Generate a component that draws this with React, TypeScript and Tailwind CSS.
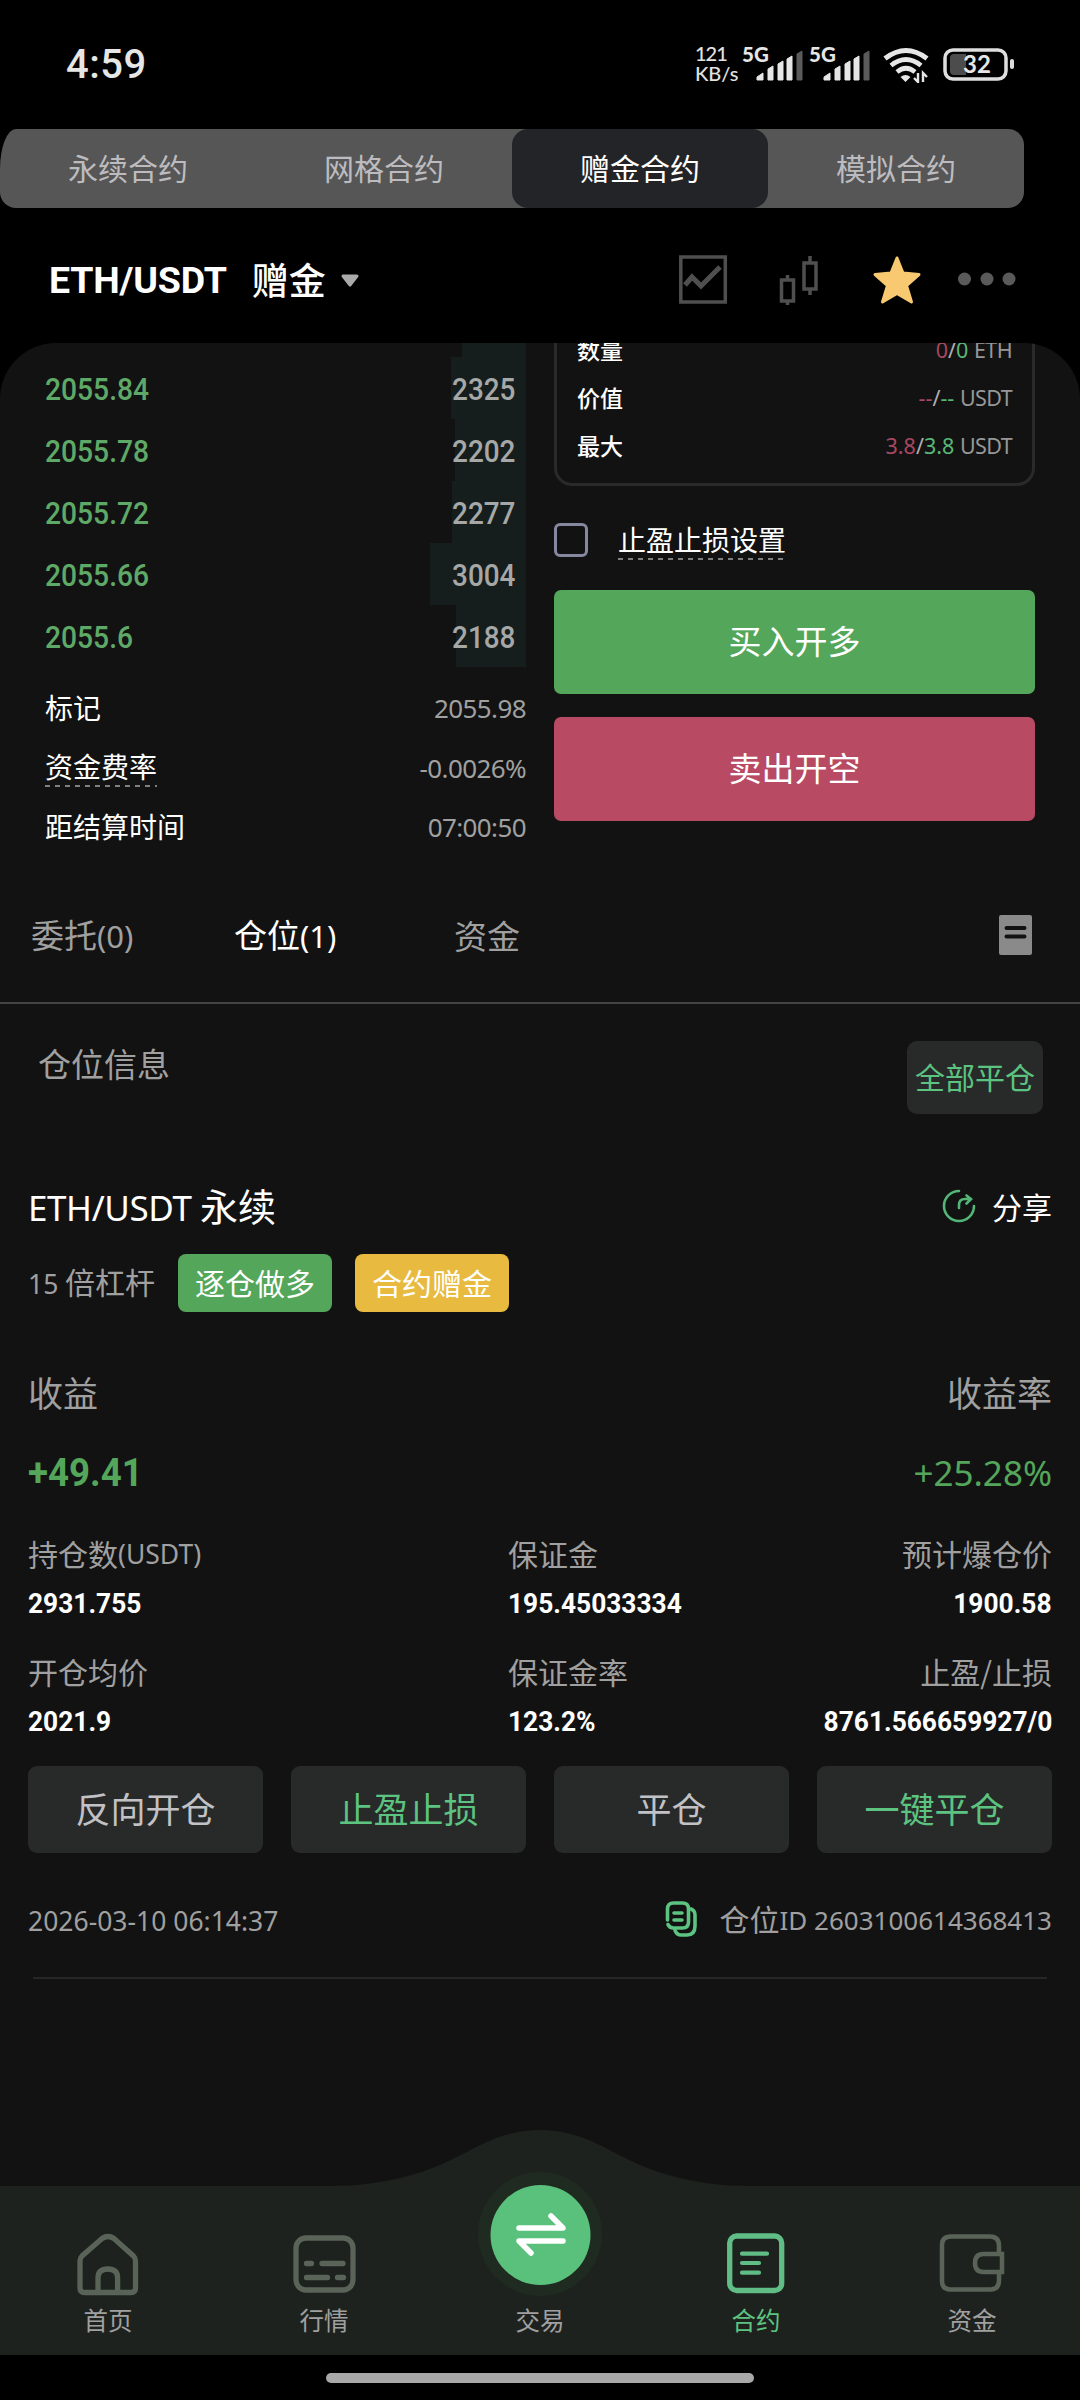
import React from 'react';
import clsx from 'clsx';

const contractTabs = ['永续合约', '网格合约', '赠金合约', '模拟合约'];

const bids = [
    {price: '2055.84', amount: '2325', depth: 75},
    {price: '2055.78', amount: '2202', depth: 71},
    {price: '2055.72', amount: '2277', depth: 74},
    {price: '2055.66', amount: '3004', depth: 96},
    {price: '2055.6', amount: '2188', depth: 70},
];

const limits = [
    {label: '数量', short: '0', long: '0', unit: 'ETH'},
    {label: '价值', short: '--', long: '--', unit: 'USDT'},
    {label: '最大', short: '3.8', long: '3.8', unit: 'USDT'},
];

const Num = ({children, className}: {children: React.ReactNode; className?: string}) => (
    <span className={clsx("inline-block font-['Roboto',sans-serif]", className)}>{children}</span>
);

const Latin = ({children, className}: {children: React.ReactNode; className?: string}) => (
    <span className={clsx("font-['Noto_Sans',sans-serif]", className)}>{children}</span>
);

function Signal() {
    return (
        <svg width="62" height="46" viewBox="0 -6 62 46">
            <text x="0" y="14" fontFamily="Lato" fontWeight="900" fontSize="20.500" fill="#e6e6e6">5G</text>
            <path d="M15 32v-3l6-4v7zM26 32V21l5-3v14zM36 32V16l5-3v19zM45 32V11l5-3v24z" fill="#e6e6e6" stroke="#e6e6e6" strokeWidth="1" strokeLinejoin="round"/>
            <path d="M55 32V6l5-3v29z" fill="#5a5a5a" stroke="#5a5a5a" strokeWidth="1" strokeLinejoin="round"/>
        </svg>
    );
}

function StatusBar() {
    return (
        <div className="flex h-[129px] items-center justify-between pr-[64px] pl-[66px]">
            <Num className="text-[40px] leading-none font-medium tracking-[0.5px] text-[#e6e6e6]">4:59</Num>
            <div className="flex items-center">
                <div className="mr-1 mb-1 w-[43px] font-['Lato',sans-serif] text-[20px] leading-[20px] font-medium text-[#e2e2e2]">
                    <div className="tracking-[-1px]">121</div>
                    <div>KB/s</div>
                </div>
                <Signal/>
                <span className="w-[5px]"/>
                <Signal/>
                <svg className="ml-[11px]" width="48" height="36" viewBox="0 0 48 36" fill="none" stroke="#e6e6e6">
                    <path d="M3 11.500Q24 -4.500 45 11.500" strokeWidth="5"/>
                    <path d="M9 18.500Q24 6.500 39 18.500" strokeWidth="4.800"/>
                    <path d="M15 25Q24 17.500 33 25" strokeWidth="4.600"/>
                    <path d="M18.500 30q5-4 10 0l-5 5z" fill="#e6e6e6" stroke="none"/>
                    <path d="M36 26v9l-4-4M41 35v-9l4 4" strokeWidth="2.400"/>
                </svg>
                <svg className="ml-[13px]" width="73" height="34" viewBox="0 0 73 34">
                    <rect x="2" y="2" width="61" height="29" rx="8" fill="none" stroke="#dedede" strokeWidth="3.500"/>
                    <path d="M7 10q0-4 4-4h12v21H11q-4 0-4-4z" fill="#4c4c4c"/>
                    <rect x="67" y="11" width="4" height="10" rx="2" fill="#dedede"/>
                    <text x="20" y="25" fontFamily="Lato" fontWeight="700" fontSize="24" fill="#e6e6e6">32</text>
                </svg>
            </div>
        </div>
    );
}

function ContractTabs() {
    return (
        <div className="flex h-[79px] w-[1024px] overflow-hidden rounded-[16px] rounded-tl-[16px_40px] bg-[#565656]">
            {contractTabs.map((tab) => (
                <div
                    key={tab}
                    className={clsx(
                        'flex w-64 items-center justify-center rounded-[16px] pb-1 text-[30px] leading-none',
                        tab === '赠金合约' ? 'bg-[#232428] text-white' : 'text-[#bcbcc0]'
                    )}
                >
                    {tab}
                </div>
            ))}
        </div>
    );
}

function PairHeader() {
    return (
        <div className="flex h-[135px] items-center justify-between pt-2 pr-[64px] pl-[49px] text-white">
            <div className="flex items-center pt-0.5">
                <Num className="text-[37.5px] leading-none font-bold tracking-[-0.2px]">ETH/USDT</Num>
                <span className="ml-[25px] pb-[3px] text-[37px] leading-none font-medium">赠金</span>
                <svg className="ml-[14px]" width="20" height="14" viewBox="0 0 20 14">
                    <path d="M3 2h14l-7 9z" fill="#aaa" stroke="#aaa" strokeWidth="3" strokeLinejoin="round"/>
                </svg>
            </div>
            <svg width="338" height="50" viewBox="0 0 338 50" fill="none">
                <g stroke="#4f4f4f" strokeWidth="3.500">
                    <rect x="2.800" y="2" width="44.500" height="45"/>
                    <path d="M7 30l7-8 9 9 19-19" strokeWidth="5"/>
                    <rect x="103.500" y="25" width="12" height="21"/>
                    <path d="M109.500 20v5M109.500 46v4M132 1v7M132 34v6"/>
                    <rect x="126" y="8" width="12" height="26"/>
                </g>
                <path d="M219 3l6 15 16 1.500-12.500 11L233.500 47 219 38.500 204.500 47l5-16.500L197 19.500 213 18z" fill="#f8c970" stroke="#f8c970" strokeWidth="3" strokeLinejoin="round"/>
                <g fill="#5a5a5a">
                    <circle cx="286.500" cy="24" r="6.500"/>
                    <circle cx="309" cy="24" r="6.500"/>
                    <circle cx="331" cy="24" r="6.500"/>
                </g>
            </svg>
        </div>
    );
}

function OrderBook() {
    return (
        <div className="w-[481px]">
            <div className="ml-auto h-[14px] w-[64px] bg-[#151e1d]"/>
            {bids.map((bid) => (
                <div key={bid.price} className="relative flex h-[62px] items-center justify-between pt-1 pr-[11px]">
                    <div className="absolute top-0 right-0 h-full bg-[#151e1d]" style={{width: bid.depth}}/>
                    <Num className="relative origin-left scale-x-91 text-[31px] font-medium text-[#5fa968]">{bid.price}</Num>
                    <Num className="relative origin-right scale-x-90 text-[31px] font-medium text-[#a6a8a7]">{bid.amount}</Num>
                </div>
            ))}
            <div className="mt-[10px] text-[28px] leading-none text-white">
                <InfoRow value="2055.98">标记</InfoRow>
                <InfoRow value="-0.0026%">
                    <span className="relative">
                        资金费率
                        <DashedLine width={112}/>
                    </span>
                </InfoRow>
                <InfoRow value="07:00:50">距结算时间</InfoRow>
            </div>
        </div>
    );
}

function InfoRow({children, value}: {children: React.ReactNode; value: string}) {
    return (
        <div className="flex h-[59.5px] items-center justify-between">
            {children}
            <Latin className="pt-[3px] text-[26px] tracking-[-0.6px] text-[#a0a0a0]">{value}</Latin>
        </div>
    );
}

function DashedLine({width}: {width: number}) {
    return (
        <svg className="absolute -bottom-[7px] left-0" width={width} height="2">
            <path d={`M0 1H${width}`} stroke="#a5a5a5" strokeWidth="1.500" strokeDasharray="5 5"/>
        </svg>
    );
}

function OrderForm() {
    return (
        <div className="ml-7 w-[481px]">
            <div className="-mt-4 h-[159px] rounded-b-[18px] border-x-[3px] border-b-[3px] border-[#2a2a2a] px-5">
                {limits.map((row) => (
                    <div key={row.label} className="flex h-12 items-center justify-between pb-[3px] text-[23px] leading-none font-medium text-white">
                        {row.label}
                        <Latin className="text-[21.5px] font-normal text-[#979797]">
                            <span className="text-[#a84760]">{row.short}</span>
                            <span className="text-[#b0b0b0]">/</span>
                            <span className="text-[#58b876]">{row.long}</span> <span className="tracking-[-0.6px]">{row.unit}</span>
                        </Latin>
                    </div>
                ))}
            </div>
            <div className="flex h-[104px] items-center pt-1">
                <span className="h-[34px] w-[34px] rounded-[6px] border-[3px] border-[#85889f]"/>
                <span className="relative -mt-0.5 ml-[30px] text-[28px] leading-none text-white">
                    止盈止损设置
                    <DashedLine width={166}/>
                </span>
            </div>
            <button className="flex h-[104px] w-full items-center justify-center rounded-[7px] bg-[#54a65a] pb-[3px] text-[33px] leading-none text-white">买入开多</button>
            <button className="mt-[23px] flex h-[104px] w-full items-center justify-center rounded-[7px] bg-[#b84b63] pb-[3px] text-[33px] leading-none text-white">卖出开空</button>
        </div>
    );
}

function PositionTabs() {
    return (
        <div className="flex h-[117px] items-center border-b-2 border-[#444] pr-[48px] pb-[19px] pl-[31px] text-[33px] leading-none text-[#a0a0a0]">
            <span className="w-[203px]">委托<Latin className="text-[31px]">(0)</Latin></span>
            <span className="w-[220px] text-white">仓位<Latin className="text-[31px]">(1)</Latin></span>
            <span>资金</span>
            <svg className="ml-auto" width="33" height="40" viewBox="0 0 33 40">
                <rect width="33" height="40" rx="2" fill="#8a8a8a"/>
                <path d="M7.500 13h18M7.500 21.500h18" stroke="#121212" strokeWidth="4" strokeLinecap="round"/>
            </svg>
        </div>
    );
}

function Field({label, value, align}: {label: React.ReactNode; value: string; align?: 'right'}) {
    return (
        <div className={clsx('flex flex-col whitespace-nowrap', align === 'right' && 'items-end')}>
            <div className="flex h-12 items-center pb-1 text-[30px] leading-none text-[#a0a0a0]">{label}</div>
            <div className="flex h-12 items-center pt-0.5">
                <Num className={clsx('scale-x-94 text-[28px] font-bold text-white', align === 'right' ? 'origin-right' : 'origin-left')}>{value}</Num>
            </div>
        </div>
    );
}

function Position() {
    return (
        <div className="px-[28px]">
            <div className="flex h-[110px] items-center justify-between pt-[13px] leading-none text-white">
                <div className="text-[38px]"><Latin className="text-[35px] tracking-[-0.4px]">ETH/USDT</Latin> 永续</div>
                <div className="flex items-center text-[30px]">
                    <svg className="mr-[16px]" width="34" height="34" viewBox="0 0 34 34" fill="none" stroke="#53b577" strokeWidth="2.600" strokeLinecap="round">
                        <path d="M17 2A15 15 0 1 0 32 17M17 19v-3q0-6 6-6h5M24.500 6.500l4.500 3.500-4.500 4.500"/>
                    </svg>
                    分享
                </div>
            </div>
            <div className="flex h-[58px] items-center text-[30px] leading-none text-white">
                <span className="w-[150px] pb-[3px] whitespace-nowrap text-[#a0a0a0]"><Latin className="text-[26.5px]">15</Latin> 倍杠杆</span>
                <span className="flex h-full w-[154px] items-center justify-center rounded-[8px] bg-[#54a65a] pb-[3px]">逐仓做多</span>
                <span className="ml-[23px] flex h-full w-[154px] items-center justify-center rounded-[8px] bg-[#e8ba40] pb-[3px]">合约赠金</span>
            </div>
            <div className="mt-12 flex h-[68px] items-center justify-between pb-[5px] text-[35px] leading-none text-[#a0a0a0]">
                <span>收益</span>
                <span>收益率</span>
            </div>
            <div className="flex h-[88px] items-center justify-between pt-[3px] text-[#54a65a]">
                <Num className="origin-left scale-x-94 text-[39px] font-bold">+49.41</Num>
                <Latin className="text-[35px]">+25.28%</Latin>
            </div>
            <div className="mt-[15px] grid grid-cols-[480px_1fr_1fr]">
                <Field label={<>持仓数<Latin className="pt-[3px] text-[26.5px]">(USDT)</Latin></>} value="2931.755"/>
                <Field label="保证金" value="195.45033334"/>
                <Field label="预计爆仓价" value="1900.58" align="right"/>
            </div>
            <div className="mt-[22px] grid grid-cols-[480px_1fr_1fr]">
                <Field label="开仓均价" value="2021.9"/>
                <Field label="保证金率" value="123.2%"/>
                <Field label="止盈/止损" value="8761.566659927/0" align="right"/>
            </div>
            <div className="mt-[21px] grid h-[87px] grid-cols-4 gap-7 text-[35px] leading-none text-[#c2c2c6]">
                <button className="rounded-[9px] bg-[#282a29] pb-1">反向开仓</button>
                <button className="rounded-[9px] bg-[#282a29] pb-1 text-[#5cc381]">止盈止损</button>
                <button className="rounded-[9px] bg-[#282a29] pb-1">平仓</button>
                <button className="rounded-[9px] bg-[#282a29] pb-1 text-[#5cc381]">一键平仓</button>
            </div>
            <div className="mx-[5px] flex h-[126px] items-center justify-between border-b-2 border-[#262626] pt-2 text-[#a0a0a0]">
                <Latin className="-ml-[5px] pt-[5px] text-[26.5px]">2026-03-10 06:14:37</Latin>
                <div className="-mr-[5px] flex items-center text-[30px] leading-none">
                    <svg className="mr-[19px]" width="36" height="38" viewBox="0 0 36 38" fill="none" stroke="#5cc381" strokeWidth="3.600" strokeLinecap="round">
                        <path d="M3.500 20V9q0-6 6-6h9q6 0 6 6v13q0 6-6 6h-9q-4 0-5.500-3.500"/>
                        <path d="M10 13h8M10 20h8M27 9q4 1.500 4 6v11q0 9-8 9h-6q-4 0-6-4.500"/>
                    </svg>
                    <span className="pb-0.5">仓位</span>
                    <Latin className="pt-0.5 text-[26px] whitespace-pre">ID 2603100614368413</Latin>
                </div>
            </div>
        </div>
    );
}

function NavItem({label, active, children}: {label: string; active?: boolean; children: React.ReactNode}) {
    return (
        <div className={clsx('flex flex-col items-center justify-end pb-[19px]', active ? 'text-[#5cc381]' : 'text-[#a0a0a0]')}>
            {children}
            <span className="mt-[10px] h-[30px] text-[24.5px] leading-[28px]">{label}</span>
        </div>
    );
}

function BottomNav() {
    const icon = {width: 64, height: 64, viewBox: '0 0 64 64', fill: 'none', strokeWidth: 5.3, strokeLinecap: 'round' as const, overflow: 'visible'};

    return (
        <div className="relative h-[225px]">
            <svg className="absolute inset-0" width="1080" height="225" viewBox="0 0 1080 225">
                <path d="M0 56H330C385 56 425 43 455 28C482 14 505 0 540 0S598 14 625 28C655 43 695 56 750 56H1080V225H0z" fill="#1e221e"/>
            </svg>
            <div className="relative grid h-full grid-cols-5">
                <NavItem label="首页">
                    <svg {...icon} stroke="#5a6358">
                        <path d="M4 56V29q0-3 2-5L26 6.500q6-4 12 0L57.500 24q2 2 2 5v27q0 4.500-4.500 4.500H8.500Q4 60.500 4 56zM22 60V46q0-9 9.800-9t9.800 9v14"/>
                    </svg>
                </NavItem>
                <NavItem label="行情">
                    <svg {...icon} stroke="#5a6358">
                        <rect x="4" y="6" width="57" height="52" rx="10"/>
                        <path d="M14.500 31.500h5M30 31.500h21M14.500 45.500h21M45.500 45.500h6"/>
                    </svg>
                </NavItem>
                <NavItem label="交易">
                    <svg width="124" height="124" viewBox="0 0 124 124" fill="none">
                        <circle cx="62" cy="62" r="62" fill="#1f2a20"/>
                        <circle cx="62.500" cy="63" r="50" fill="#5ac17d"/>
                        <path d="M41 56h44L73 44M85 69H41l12 12" stroke="#fff" strokeWidth="5.500" strokeLinecap="round" strokeLinejoin="round"/>
                    </svg>
                </NavItem>
                <NavItem label="合约" active>
                    <svg {...icon} stroke="#5fbd85">
                        <rect x="5.700" y="4" width="52" height="54.500" rx="7"/>
                        <path d="M18 21.700h25M18 31h17M18 40.700h17" strokeWidth="4.200"/>
                    </svg>
                </NavItem>
                <NavItem label="资金">
                    <svg {...icon} stroke="#5a6358" strokeWidth="4.500" strokeLinecap="butt">
                        <path d="M59 20V14Q59 4.500 50 4.500H11Q2 4.500 2 13v36q0 8.500 9 8.500h39q9 0 9-9V42"/>
                        <path d="M62 22H43.500q-8.500 0-8.500 9t8.500 9H62z"/>
                    </svg>
                </NavItem>
            </div>
        </div>
    );
}

export default function App() {
    return (
        <div className="flex h-[2400px] w-[1080px] flex-col overflow-hidden bg-black font-['Noto_Sans_CJK_SC',sans-serif]">
            <StatusBar/>
            <ContractTabs/>
            <PairHeader/>
            <div className="flex flex-1 flex-col overflow-hidden rounded-t-[56px] bg-[#121212]">
                <div className="flex h-[544px] pl-[45px]">
                    <OrderBook/>
                    <OrderForm/>
                </div>
                <PositionTabs/>
                <div className="flex h-[140px] items-start justify-between pt-[37px] pr-[37px] pl-[38px]">
                    <span className="mt-[6px] text-[33px] leading-none text-[#a0a0a0]">仓位信息</span>
                    <button className="h-[73px] w-[136px] rounded-[10px] bg-[#282a29] pb-[3px] text-[30px] leading-none text-[#5cc381]">全部平仓</button>
                </div>
                <Position/>
            </div>
            <div className="bg-[#121212]">
                <BottomNav/>
            </div>
            <div className="flex h-[45px] justify-center pt-[18px]">
                <div className="h-[10px] w-[428px] rounded-full bg-[#a8a8a8]"/>
            </div>
        </div>
    );
}
